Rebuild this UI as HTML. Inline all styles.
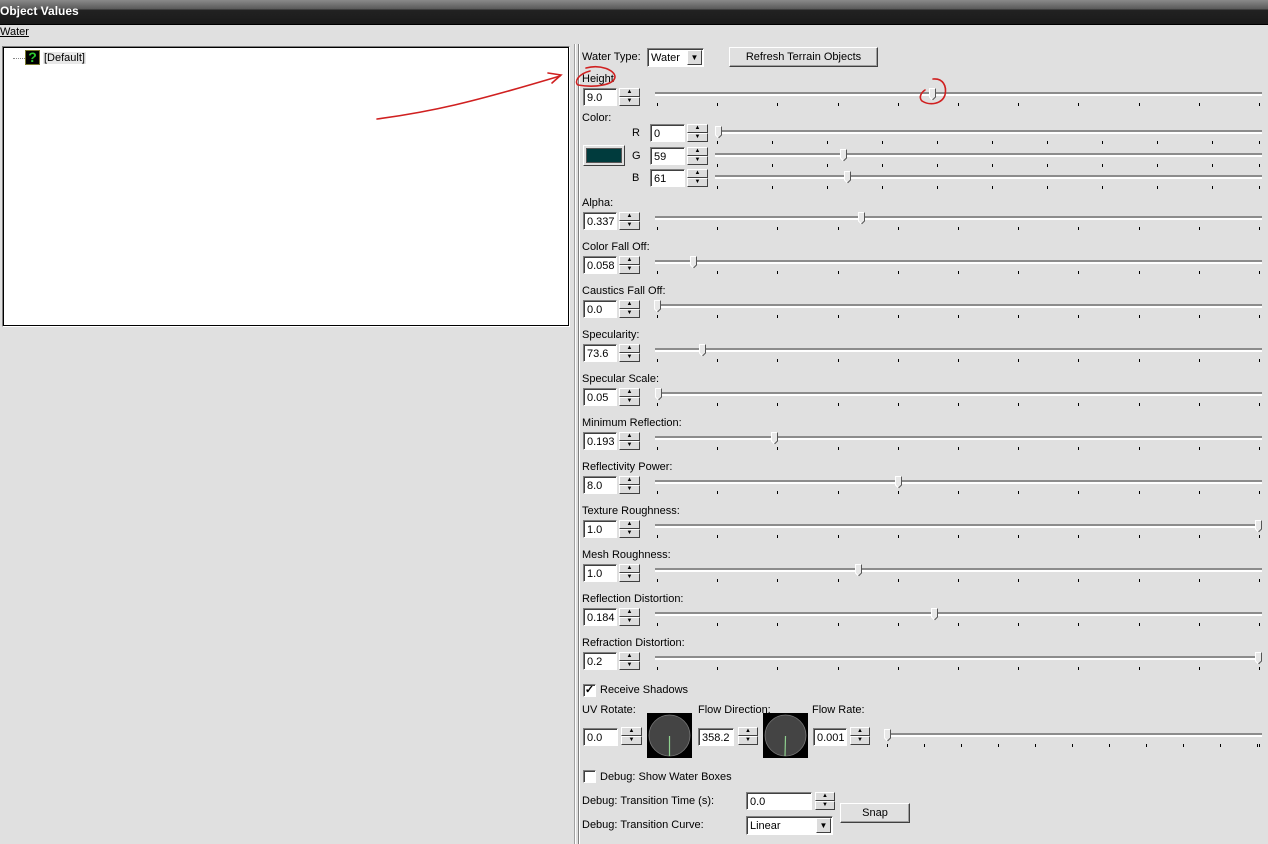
<!DOCTYPE html>
<html><head><meta charset="utf-8">
<style>
*{box-sizing:border-box;margin:0;padding:0}
body{width:1268px;height:844px;overflow:hidden;background:#e0e0e0;font-family:"Liberation Sans",sans-serif;font-size:11px;color:#000;position:relative}
.a{position:absolute;white-space:nowrap}
.title{left:0;top:0;width:1268px;height:25px;background:linear-gradient(#8a8a8a 0,#5a5a5a 9px,#222 10px,#1a1a1a 24px);border-bottom:1px solid #000}
.title span{position:absolute;left:0;top:4px;color:#fff;font-weight:bold;font-size:12px}
.tb{background:#fff;border-top:1px solid #808080;border-left:1px solid #808080;border-right:1px solid #fff;border-bottom:1px solid #fff;box-shadow:inset 1px 1px 0 #404040;padding:3px 0 0 3px;font-size:11px}
.sp{border:1px solid;border-color:#fff #404040 #404040 #fff;background:#dcdcdc}
.trk{height:4px;border-top:2px solid #8c8c8c;border-bottom:2px solid #fff}
.tick{width:1px;height:3px;background:#000}
.btn{background:#e0e0e0;border:1px solid;border-color:#fff #404040 #404040 #fff;box-shadow:inset -1px -1px 0 #a0a0a0;text-align:center;padding-top:3px}
.cb{width:13px;height:13px;background:#fff;border:1px solid;border-color:#808080 #fff #fff #808080;box-shadow:inset 1px 1px 0 #404040}
</style></head><body>
<div class="a title"><span>Object Values</span></div>
<div class="a" style="left:0;top:26px;text-decoration:underline">Water</div>
<div class="a" style="left:2px;top:46px;width:568px;height:281px;background:#fff;border:1px solid #808080;border-right-color:#fff;border-bottom-color:#fff"></div>
<div class="a" style="left:3px;top:47px;width:566px;height:279px;border:1px solid #000;background:#fff"></div>
<div class="a" style="left:13px;top:58px;width:12px;border-top:1px dotted #888"></div>
<div class="a" style="left:25px;top:50px;width:15px;height:15px;background:#000;border:1px solid #7a7a30;color:#2ec82e;font-weight:bold;font-size:14px;line-height:13px;text-align:center">?</div>
<div class="a" style="left:43px;top:52px;background:#e8e8e8;padding:0 1px">[Default]</div>
<div class="a" style="left:574px;top:44px;width:1px;height:800px;background:#a0a0a0"></div>
<div class="a" style="left:575px;top:44px;width:1px;height:800px;background:#fff"></div>
<div class="a" style="left:578px;top:44px;width:1px;height:800px;background:#808080"></div>
<div class="a" style="left:579px;top:44px;width:1px;height:800px;background:#fff"></div>

<div class="a" style="left:582px;top:51px">Water Type:</div>
<div class="a tb" style="left:647px;top:48px;width:57px;height:19px">Water</div>
<div class="a sp" style="left:687px;top:50px;width:15px;height:15px;font-size:8px;text-align:center;line-height:13px">▼</div>
<div class="a btn" style="left:729px;top:47px;width:149px;height:20px">Refresh Terrain Objects</div>

<div class="a" style="left:582px;top:112px">Color:</div>
<div class="a" style="left:583px;top:145px;width:42px;height:21px;border:1px solid;border-color:#fff #404040 #404040 #fff;padding:2px"><div style="width:100%;height:100%;background:#003b3d;border:1px solid #555"></div></div>
<div class="a" style="left:632px;top:127px">R</div>
<div class="a" style="left:632px;top:150px">G</div>
<div class="a" style="left:632px;top:172px">B</div>

<div class="a cb" style="left:583px;top:684px;font-size:11px;line-height:11px;text-align:center;font-weight:bold">✓</div>
<div class="a" style="left:600px;top:684px">Receive Shadows</div>
<div class="a" style="left:582px;top:704px">UV Rotate:</div>
<div class="a" style="left:698px;top:704px">Flow Direction:</div>
<div class="a" style="left:812px;top:704px">Flow Rate:</div>
<div class="a cb" style="left:583px;top:770px"></div>
<div class="a" style="left:600px;top:771px">Debug: Show Water Boxes</div>
<div class="a" style="left:582px;top:795px">Debug: Transition Time (s):</div>
<div class="a" style="left:582px;top:819px">Debug: Transition Curve:</div>
<div class="a tb" style="left:746px;top:792px;width:66px;height:18px">0.0</div>
<div class="a tb" style="left:746px;top:816px;width:87px;height:19px">Linear</div>
<div class="a sp" style="left:816px;top:818px;width:15px;height:15px;font-size:8px;text-align:center;line-height:13px">▼</div>
<div class="a btn" style="left:840px;top:803px;width:70px;height:20px">Snap</div>

<div id="g"></div>
<svg class="a" style="left:0;top:0" width="1268" height="844">
<g fill="none" stroke="#d02020" stroke-width="1.6" stroke-linecap="round">
<path d="M377 119 C430 112 470 103 560 76"/>
<path d="M548 73 L561 75 L552 83"/>
<path d="M586 68 C600 64 615 70 615 77 C614 85 595 88 578 85 C574 82 578 74 590 71"/>
<path d="M933 79 C943 78 947 86 945 95 C942 104 930 106 922 101 C918 97 922 92 925 90"/>
</g>
<g>
<rect x="647" y="713" width="45" height="45" fill="#000"/><circle cx="669.5" cy="735.5" r="20.5" fill="#444" stroke="#777" stroke-width="0.8"/><line x1="669.5" y1="736" x2="669.5" y2="756" stroke="#8fd08f" stroke-width="1.2"/>
<rect x="763" y="713" width="45" height="45" fill="#000"/><circle cx="785.5" cy="735.5" r="20.5" fill="#444" stroke="#777" stroke-width="0.8"/><line x1="785.5" y1="736" x2="785" y2="756" stroke="#8fd08f" stroke-width="1.2"/>
</g>
</svg>
<script>
var g=document.getElementById('g'),h='';
function box(x,y,w,v){h+='<div class="a tb" style="left:'+x+'px;top:'+y+'px;width:'+w+'px;height:18px">'+v+'</div>';}
function spin(x,y,w){h+='<div class="a sp" style="left:'+x+'px;top:'+y+'px;width:'+w+'px;height:9px;font-size:6px;line-height:7px;text-align:center">▲</div><div class="a sp" style="left:'+x+'px;top:'+(y+9)+'px;width:'+w+'px;height:9px;font-size:6px;line-height:7px;text-align:center">▼</div>';}
function slider(x1,x2,y,step,th){h+='<div class="a trk" style="left:'+x1+'px;top:'+y+'px;width:'+(x2-x1)+'px"></div>';
 for(var t=x1+2;t<x2-4;t+=step)h+='<div class="a tick" style="left:'+t+'px;top:'+(y+11)+'px"></div>';
 h+='<div class="a tick" style="left:'+(x2-3)+'px;top:'+(y+11)+'px"></div>';
 h+='<svg class="a" style="left:'+(th-3)+'px;top:'+(y-4)+'px" width="8" height="13"><path d="M0.5 0.5H6.5V9L3.5 12L0.5 9Z" fill="#e8e8e8" stroke="#fff"/><path d="M6.5 0.5V9L3.5 12" fill="none" stroke="#555"/></svg>';}
var rows=[["Height","9.0",932],["Alpha:","0.337",861],["Color Fall Off:","0.058",693],["Caustics Fall Off:","0.0",657],["Specularity:","73.6",702],["Specular Scale:","0.05",658],["Minimum Reflection:","0.193",774],["Reflectivity Power:","8.0",898],["Texture Roughness:","1.0",1258],["Mesh Roughness:","1.0",858],["Reflection Distortion:","0.184",934],["Refraction Distortion:","0.2",1258]];
rows.forEach(function(r,i){var y=i==0?88:212+(i-1)*44;
 h+='<div class="a" style="left:582px;top:'+(y-15)+'px">'+r[0]+'</div>';box(583,y,34,r[1]);spin(619,y,21);slider(655,1262,y+4,60.2,r[2]);});
[["0",124,718],["59",147,843],["61",169,847]].forEach(function(r){box(650,r[1],35,r[0]);spin(687,r[1],21);slider(715,1262,r[1]+6,55,r[2]);});
box(583,728,35,"0.0");spin(621,727,21);box(698,728,36,"358.2");spin(738,727,20);box(813,728,34,"0.001");spin(850,727,20);slider(885,1262,733,37,887);
spin(815,792,20);
g.innerHTML=h;
</script>
</body></html>
